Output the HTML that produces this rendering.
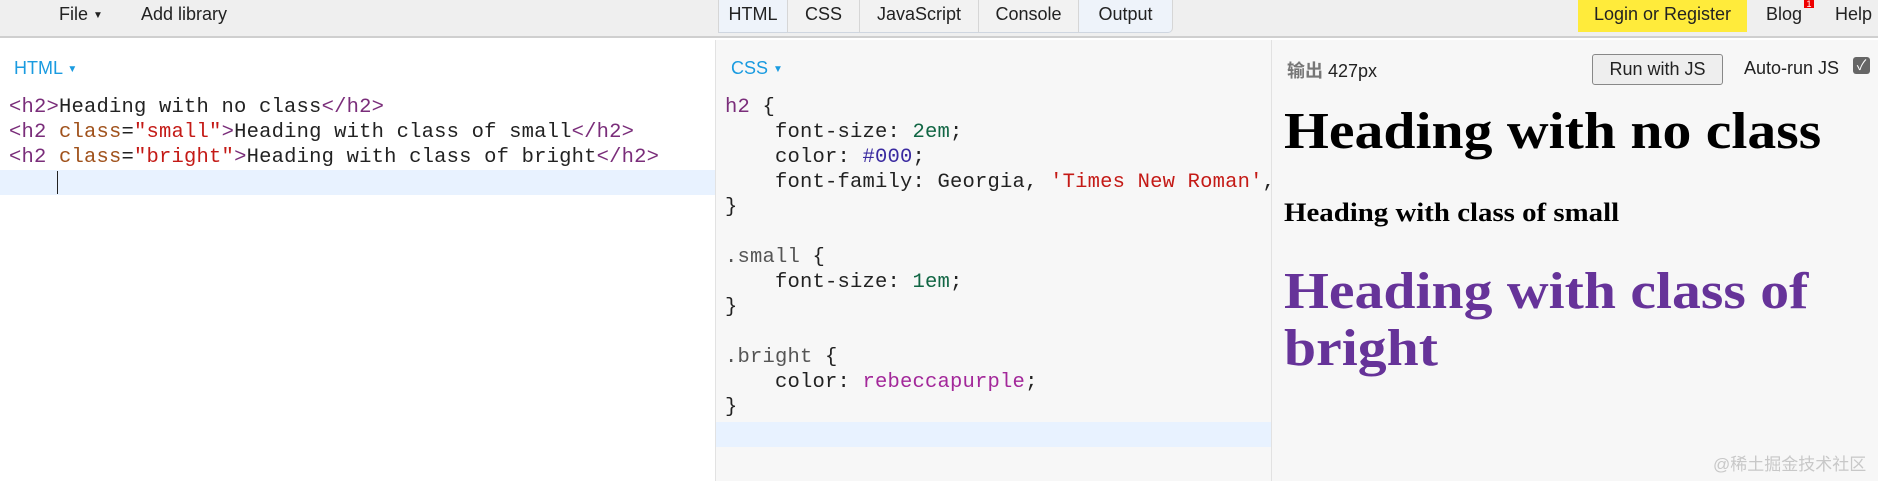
<!DOCTYPE html>
<html><head><meta charset="utf-8"><style>
*{margin:0;padding:0;box-sizing:border-box}
body{width:1878px;height:481px;overflow:hidden;background:#fff;font-family:"Liberation Sans","Noto Sans CJK SC",sans-serif;position:relative;color:#222}
.a{position:absolute;white-space:nowrap}
#top{position:absolute;left:0;top:0;width:1878px;height:38px;background:#efefef;border-bottom:2px solid #cfcfcf}
.t{font-size:18px;top:4px}
.tab{position:absolute;top:0;height:33px;border-right:1px solid #d6d6d6;border-bottom:1px solid #cfd6e0;font-size:18px;line-height:29px;text-align:center;background:#f2f2f2}
.code{font-family:"Liberation Mono",monospace;font-size:20.5px;line-height:25px;letter-spacing:0.2px;color:#222}
.tg{color:#7a2d7a}.at{color:#a0521c}.st{color:#c41a16}.nu{color:#116644}.hx{color:#3a2aa0}.kw{color:#7a2d7a}
.lab{color:#1a9be0;font-size:18px}
.serif{font-family:"Liberation Serif",serif;font-weight:bold;transform:scaleX(1.11);transform-origin:0 0}
</style></head><body>
<div id="top"></div>
<div class="a t" style="left:59px">File <span style="font-size:10px;vertical-align:2px">▼</span></div>
<div class="a t" style="left:141px">Add library</div>
<div class="tab" style="left:718px;width:70px;background:#eef3fa;border-left:1px solid #d6d6d6">HTML</div>
<div class="tab" style="left:788px;width:72px">CSS</div>
<div class="tab" style="left:860px;width:119px">JavaScript</div>
<div class="tab" style="left:979px;width:100px">Console</div>
<div class="tab" style="left:1079px;width:94px;background:#eef3fa;border-radius:0 0 5px 0">Output</div>
<div class="a" style="left:1578px;top:0;width:169px;height:32px;background:#ffeb3b;font-size:18px;line-height:28px;text-align:center">Login or Register</div>
<div class="a t" style="left:1766px">Blog</div>
<div class="a" style="left:1804px;top:0;width:10px;height:8px;background:#e00;color:#fff;font-size:9px;line-height:8px;text-align:center">1</div>
<div class="a t" style="left:1835px">Help</div>

<div class="a" style="left:715px;top:40px;width:556px;height:441px;background:#f7f7f7;border-left:1px solid #e2e2e2"></div>
<div class="a" style="left:1271px;top:40px;width:607px;height:441px;background:#f7f7f7;border-left:1px solid #e2e2e2"></div>

<div class="a lab" style="left:14px;top:58px">HTML <span style="font-size:10px;vertical-align:2px">▼</span></div>
<div class="a lab" style="left:731px;top:58px">CSS <span style="font-size:10px;vertical-align:2px">▼</span></div>

<div class="a" style="left:0;top:170px;width:715px;height:25px;background:#e8f2ff"></div>
<div class="a" style="left:57px;top:171px;width:1px;height:23px;background:#222"></div>
<div class="a code" style="left:9px;top:95px"><span class="tg">&lt;h2&gt;</span>Heading with no class<span class="tg">&lt;/h2&gt;</span><br><span class="tg">&lt;h2 </span><span class="at">class</span>=<span class="st">"small"</span><span class="tg">&gt;</span>Heading with class of small<span class="tg">&lt;/h2&gt;</span><br><span class="tg">&lt;h2 </span><span class="at">class</span>=<span class="st">"bright"</span><span class="tg">&gt;</span>Heading with class of bright<span class="tg">&lt;/h2&gt;</span></div>

<div class="a" style="left:716px;top:422px;width:555px;height:25px;background:#e8f2ff"></div>
<div class="a code" style="left:725px;top:95px;width:545px;overflow:hidden"><span class="kw">h2</span> {<br>&nbsp;&nbsp;&nbsp;&nbsp;font-size: <span class="nu">2em</span>;<br>&nbsp;&nbsp;&nbsp;&nbsp;color: <span class="hx">#000</span>;<br>&nbsp;&nbsp;&nbsp;&nbsp;font-family: Georgia, <span class="st">'Times New Roman'</span>, serif;<br>}<br><br><span style="color:#555">.small</span> {<br>&nbsp;&nbsp;&nbsp;&nbsp;font-size: <span class="nu">1em</span>;<br>}<br><br><span style="color:#555">.bright</span> {<br>&nbsp;&nbsp;&nbsp;&nbsp;color: <span style="color:#a3289a">rebeccapurple</span>;<br>}</div>

<div class="a" style="left:1287px;top:57px;font-size:18px"><span style="color:#777;font-weight:bold">输出</span> 427px</div>
<div class="a" style="left:1592px;top:54px;width:131px;height:31px;border:1px solid #888;border-radius:3px;background:#eee;font-size:18px;line-height:29px;text-align:center">Run with JS</div>
<div class="a" style="left:1744px;top:58px;font-size:18px">Auto-run JS</div>
<div class="a" style="left:1853px;top:57px;width:17px;height:17px;background:#666;border-radius:3px;color:#fff;font-size:14px;line-height:17px;text-align:center">✓</div>

<div class="a serif" style="left:1284px;top:102px;font-size:52px;color:#000">Heading with no class</div>
<div class="a serif" style="left:1284px;top:198px;font-size:26px;color:#000">Heading with class of small</div>
<div class="a serif" style="left:1284px;top:263px;font-size:52px;line-height:57px;color:#663399;white-space:normal;width:500px">Heading with class of bright</div>
<div class="a" style="left:1713px;top:450px;font-size:17px;color:#c8c8c8">@稀土掘金技术社区</div>
</body></html>
